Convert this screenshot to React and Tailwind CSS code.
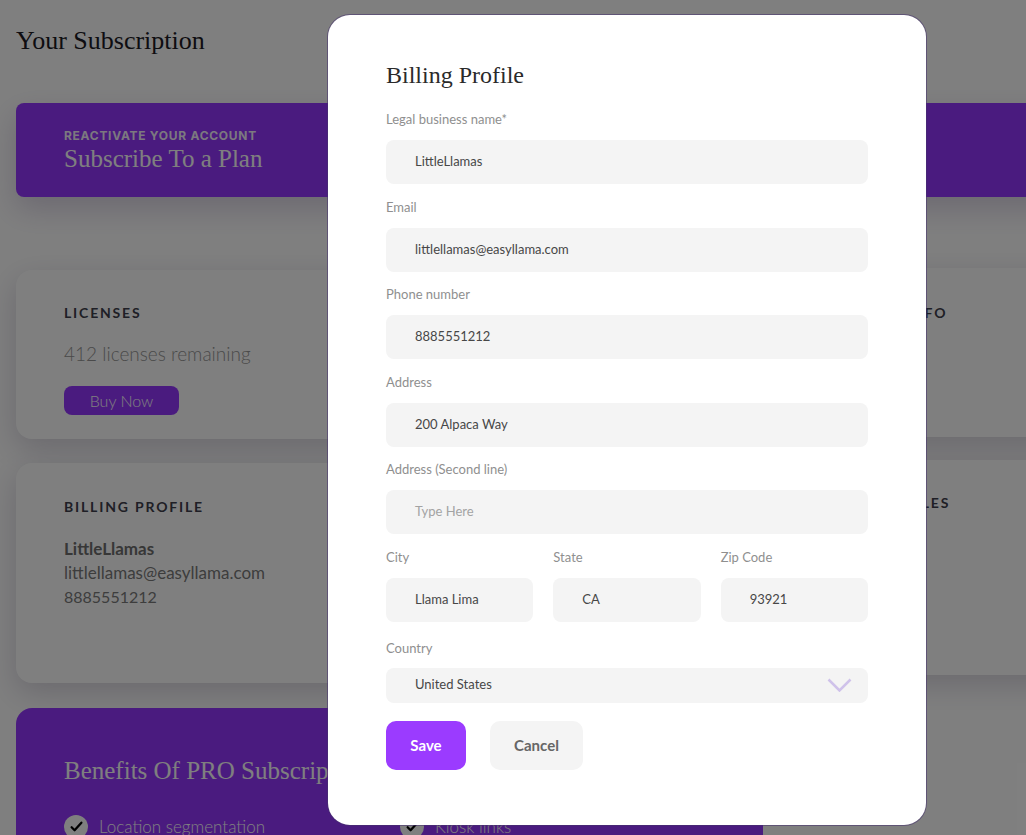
import React from "react";

function CheckCircle() {
  return (
    <span className="flex h-6 w-6 shrink-0 items-center justify-center rounded-full bg-white">
      <svg viewBox="0 0 24 24" className="h-[13px] w-[13px]">
        <path d="M3 13.5l5.5 5.5L21 5" fill="none" stroke="#000" strokeWidth="4.2" strokeLinecap="round" strokeLinejoin="round" />
      </svg>
    </span>
  );
}

function Field({ label, value, placeholder, last }) {
  return (
    <div className={last ? "" : "mb-[14.5px]"}>
      <div className="text-[13px] leading-4 text-[#8f8f8f]">{label}</div>
      <div className="mt-[13px] flex h-[44px] items-center rounded-lg bg-[#f4f4f4] pl-[29px] text-[13px]">
        {value ? (
          <span className="text-[#474747]">{value}</span>
        ) : (
          <span className="text-[#a3a3a3]">{placeholder}</span>
        )}
      </div>
    </div>
  );
}

export default function App() {
  return (
    <div className="relative h-[835px] w-full overflow-hidden bg-white font-['Lato','Open_Sans',sans-serif]">
      {/* Page */}
      <div className="w-[1070px] pl-4 pt-[25px]">
        <h1 className="font-['Liberation_Serif',serif] text-[26px] leading-8 text-[#1c1a24]">Your Subscription</h1>

        <div className="mt-[46px] h-[94px] rounded-lg bg-[#9537ff] pl-12 pt-[25px] shadow-[0_12px_30px_rgba(60,30,110,0.2)]">
          <div className="font-['Inter',sans-serif] text-[12px] font-bold leading-4 tracking-[0.06em] text-white/95">REACTIVATE YOUR ACCOUNT</div>
          <div className="font-['Liberation_Serif',serif] text-[25px] leading-[30px] text-white">Subscribe To a Plan</div>
        </div>

        <div className="mt-[73px] flex gap-6">
          <div className="w-[747px] shrink-0">
            <div className="h-[169px] rounded-2xl bg-white px-12 pt-[33px] shadow-[0_10px_30px_rgba(50,35,80,0.2)]">
              <div className="text-[14px] font-bold leading-5 tracking-[0.13em] text-[#3e3e4c]">LICENSES</div>
              <div className="mt-[19px] text-[19px] font-light leading-6 text-[#949494]">412 licenses remaining</div>
              <button className="mt-5 flex h-[29px] w-[115px] items-center justify-center rounded-lg bg-[#9537ff] text-[16px] font-light text-white">Buy Now</button>
            </div>

            <div className="mt-6 h-[220px] rounded-2xl bg-white px-12 pt-[34px] shadow-[0_10px_30px_rgba(50,35,80,0.2)]">
              <div className="text-[14px] font-bold leading-5 tracking-[0.13em] text-[#3e3e4c]">BILLING PROFILE</div>
              <div className="mt-5 text-[17px] font-bold leading-6 text-[#6e6e6e]">LittleLlamas</div>
              <div className="text-[17px] leading-6 text-[#7a7a7a]">littlellamas@easyllama.com</div>
              <div className="text-[16px] leading-6 text-[#7a7a7a]">8885551212</div>
            </div>

            <div className="mt-[25px] h-[300px] rounded-2xl bg-[#9537ff] pl-12 pt-12">
              <div className="font-['Liberation_Serif',serif] text-[25px] leading-[30px] text-white">Benefits Of PRO Subscription</div>
              <div className="mt-7 grid grid-cols-[336px_1fr]">
                <div className="flex items-center gap-[11px]">
                  <CheckCircle />
                  <span className="text-[17px] font-light text-white">Location segmentation</span>
                </div>
                <div className="flex items-center gap-[11px]">
                  <CheckCircle />
                  <span className="text-[17px] font-light text-white">Kiosk links</span>
                </div>
              </div>
            </div>
          </div>

          <div className="flex-1">
            <div className="-mt-[2px] h-[169px] rounded-2xl bg-white pl-12 pt-[35px] shadow-[0_10px_30px_rgba(50,35,80,0.2)]">
              <div className="text-[14px] font-bold leading-5 tracking-[0.13em] text-[#3e3e4c]">BILLING INFO</div>
            </div>
            <div className="mt-[23px] h-[215px] rounded-2xl bg-white pl-12 pt-[33px] shadow-[0_10px_30px_rgba(50,35,80,0.2)]">
              <div className="text-[14px] font-bold leading-5 tracking-[0.13em] text-[#3e3e4c]">ADMIN ROLES</div>
            </div>
          </div>
        </div>
      </div>

      {/* Overlay */}
      <div className="absolute inset-0 bg-black/50" />

      {/* Modal */}
      <div className="absolute left-[328px] top-[15px] h-[810px] w-[598px] rounded-[22px] bg-white px-[58px] pt-[44px] shadow-[0_0_0_1px_rgba(70,50,110,0.55)]">
        <h2 className="mb-5 font-['Liberation_Serif',serif] text-[24px] leading-8 text-[#2a2a2a]">Billing Profile</h2>

        <Field label="Legal business name*" value="LittleLlamas" />
        <Field label="Email" value="littlellamas@easyllama.com" />
        <Field label="Phone number" value="8885551212" />
        <Field label="Address" value="200 Alpaca Way" />
        <Field label="Address (Second line)" placeholder="Type Here" />

        <div className="grid grid-cols-3 gap-5">
          <Field label="City" value="Llama Lima" last />
          <Field label="State" value="CA" last />
          <Field label="Zip Code" value="93921" last />
        </div>

        <div className="mt-[18px] text-[13px] leading-4 text-[#8f8f8f]">Country</div>
        <div className="mt-3 flex h-[35px] items-center justify-between rounded-lg bg-[#f4f4f4] pl-[29px] pr-4 text-[13px] text-[#474747]">
          <span>United States</span>
          <svg width="25" height="14" viewBox="0 0 25 14">
            <path d="M1.5 1.5l11 11 11-11" fill="none" stroke="#cfc2ea" strokeWidth="2.5" />
          </svg>
        </div>

        <div className="mt-[18px] flex gap-6">
          <button className="flex h-[49px] w-[80px] items-center justify-center rounded-[10px] bg-[#9b3bff] text-[15px] font-bold text-white">Save</button>
          <button className="flex h-[49px] w-[93px] items-center justify-center rounded-[10px] bg-[#f4f4f4] text-[15px] font-bold text-[#666]">Cancel</button>
        </div>
      </div>
    </div>
  );
}
